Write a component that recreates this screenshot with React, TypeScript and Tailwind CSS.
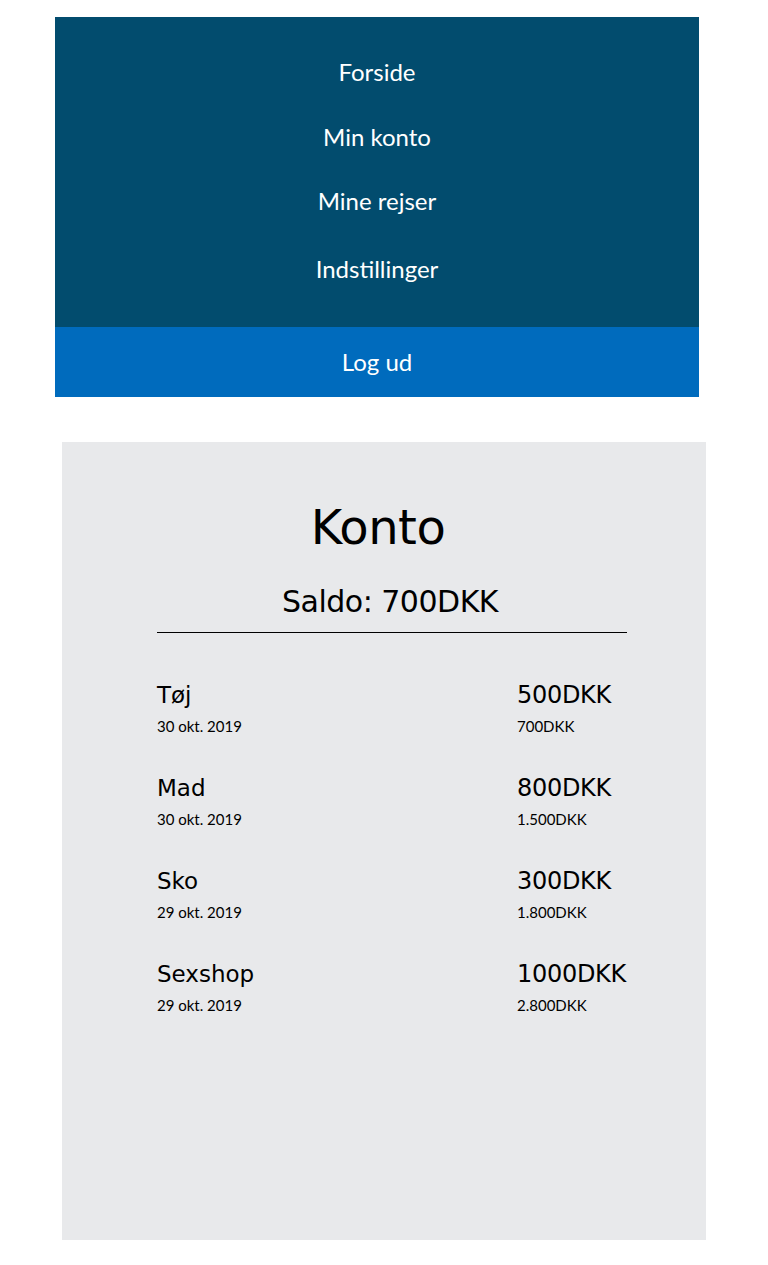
const rows = [
  { name: 'Tøj', date: '30 okt. 2019', amount: '500DKK', total: '700DKK' },
  { name: 'Mad', date: '30 okt. 2019', amount: '800DKK', total: '1.500DKK' },
  { name: 'Sko', date: '29 okt. 2019', amount: '300DKK', total: '1.800DKK' },
  { name: 'Sexshop', date: '29 okt. 2019', amount: '1000DKK', total: '2.800DKK' },
]

export default function App() {
  return (
    <div className="min-h-[1265px] bg-white pt-[17px] font-['Lato',sans-serif]">
      <nav className="ml-[55px] w-[644px] bg-[#024c6e] text-[24px] text-white">
        <ul className="flex flex-col items-center pt-[23px]">
          <li className="h-[65px] leading-[64px]">Forside</li>
          <li className="h-[64px] leading-[64px]">Min konto</li>
          <li className="h-[66px] leading-[64px]">Mine rejser</li>
          <li className="h-[92px] leading-[68px]">Indstillinger</li>
        </ul>
        <button className="block h-[70px] w-full bg-[#006bbd] text-center text-[24px] text-white">Log ud</button>
      </nav>

      <main className="ml-[62px] mt-[45px] h-[798px] w-[644px] bg-[#e8e9eb] pt-[52px] text-black">
        <h1 className="pr-[12px] text-center text-[48px] leading-[66px] font-['DejaVu_Sans',sans-serif] tracking-[-0.5px]">Konto</h1>
        <div className="ml-[95px] w-[470px]">
          <p className="mt-[22px] pr-[4px] text-center text-[30px] leading-[40px] font-['DejaVu_Sans',sans-serif] tracking-[-0.5px]">Saldo: 700DKK</p>
          <div className="mt-[10px] h-px bg-black" />
          <div className="mt-[47px] flex flex-col gap-[38px]">
            {rows.map((r) => (
              <div key={r.name} className="flex">
                <div className="w-[360px]">
                  <div className="text-[23px] leading-[30px] font-['DejaVu_Sans',sans-serif]">{r.name}</div>
                  <div className="mt-[8px] text-[15px] leading-[17px]">{r.date}</div>
                </div>
                <div>
                  <div className="text-[24px] leading-[30px] font-['DejaVu_Sans',sans-serif] tracking-[-0.3px]">{r.amount}</div>
                  <div className="mt-[8px] text-[15px] leading-[17px]">{r.total}</div>
                </div>
              </div>
            ))}
          </div>
        </div>
      </main>
    </div>
  )
}
